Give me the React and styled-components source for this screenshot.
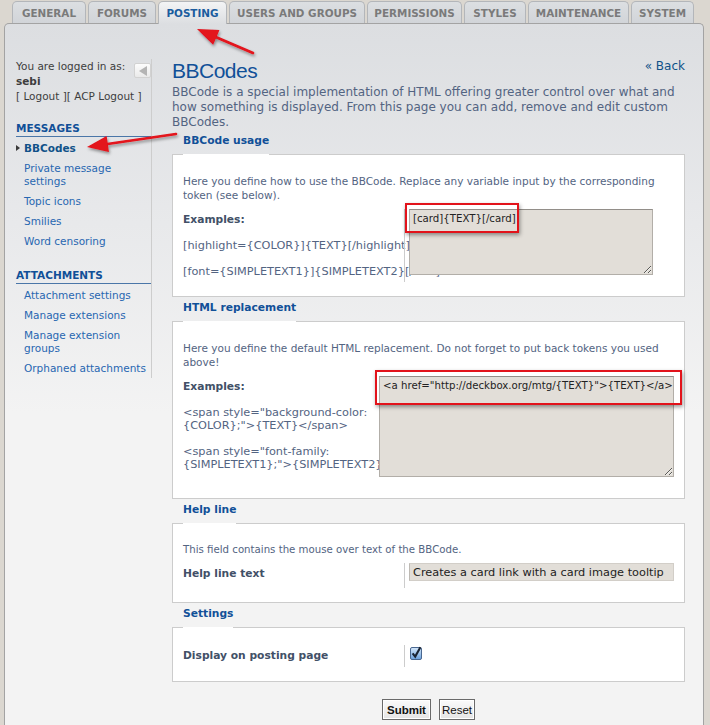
import React from 'react';
import styled, { createGlobalStyle } from 'styled-components';

const GlobalStyle = createGlobalStyle`
  html, body {
    margin: 0;
    padding: 0;
    background: #dbd7d0;
  }
  body {
    font-family: "DejaVu Sans", Verdana, sans-serif;
    color: #536482;
  }
`;

const Page = styled.div`
  position: relative;
  width: 710px;
  height: 725px;
  overflow: hidden;
  background: #dbd7d0;
`;

const TabBar = styled.ul`
  display: flex;
  align-items: flex-start;
  gap: 2px;
  margin: 0;
  padding: 1px 0 0 12px;
  height: 23px;
  box-sizing: border-box;
  list-style: none;
  position: relative;
  z-index: 1;
`;

const Tab = styled.li`
  box-sizing: border-box;
  width: ${(p) => p.$w}px;
  height: ${(p) => (p.$active ? 23 : 22)}px;
  padding-top: 1px;
  border: 1px solid #b3b6ba;
  border-bottom: none;
  border-radius: 5px 5px 0 0;
  background: ${(p) =>
    p.$active ? 'linear-gradient(#f3f4f5, #dcdee1)' : 'linear-gradient(#dcdfe2, #d1d4d8)'};
  color: ${(p) => (p.$active ? '#1b5c9e' : '#7a7a7a')};
  font: bold 10.4px/20px "DejaVu Sans", sans-serif;
  text-align: center;
  white-space: nowrap;
`;

const Panel = styled.div`
  box-sizing: border-box;
  width: 700px;
  margin-left: 4px;
  min-height: 702px;
  border: 1px solid #a3a3a3;
  border-bottom: none;
  border-radius: 5px 5px 0 0;
  background: linear-gradient(#dcdee1 0, #e8e9eb 200px, #f3f3f3 390px);
  display: flex;
  align-items: flex-start;
`;

const Sidebar = styled.nav`
  box-sizing: border-box;
  width: 147px;
  flex-shrink: 0;
  margin-top: 35px;
  padding-left: 11px;
  border-right: 1px solid #cdcdcd;
  font-size: 10.5px;
`;

const UserBox = styled.div`
  line-height: 15px;
  color: #3d3d3d;

  b {
    font-weight: bold;
  }
`;

const Toggle = styled.span`
  float: right;
  box-sizing: border-box;
  width: 17px;
  height: 15px;
  margin-top: 4px;
  border: 1px solid #d2d2d2;
  border-radius: 2px;
  background: linear-gradient(#fcfcfc, #eaeaea);
  display: flex;
  align-items: center;
  justify-content: center;

  &::before {
    content: '';
    border-right: 8px solid #b4b4b4;
    border-top: 5px solid transparent;
    border-bottom: 5px solid transparent;
  }
`;

const MenuTitle = styled.div`
  margin-top: 17px;
  padding-bottom: 1px;
  border-bottom: 1px solid #4a76a8;
  font-weight: bold;
  line-height: 14px;
  color: #115098;
  text-transform: uppercase;
`;

const MenuList = styled.ul`
  list-style: none;
  margin: 0;
  padding: 1px 0 0 8px;
`;

const MenuItem = styled.li`
  position: relative;
  padding: 4px 0 3px;
  line-height: 13px;
  color: ${(p) => (p.$active ? '#105289' : '#2867b1')};
  font-weight: ${(p) => (p.$active ? 'bold' : 'normal')};

  &::before {
    content: '';
    display: ${(p) => (p.$active ? 'block' : 'none')};
    position: absolute;
    left: -8px;
    top: 7px;
    border-left: 4px solid #3a3a3a;
    border-top: 3.5px solid transparent;
    border-bottom: 3.5px solid transparent;
  }
`;

const Main = styled.main`
  flex: 1;
  min-width: 0;
  padding: 35px 18px 0 20px;
`;

const TitleRow = styled.div`
  display: flex;
  justify-content: space-between;
  align-items: flex-start;
`;

const Title = styled.h1`
  margin: 0;
  font: normal 21px/24px "Liberation Sans", Arial, sans-serif;
  letter-spacing: -0.5px;
  color: #115098;
`;

const BackLink = styled.a`
  font-size: 12px;
  line-height: 15px;
  color: #105289;
  text-decoration: none;
`;

const Intro = styled.p`
  margin: 2px 0 0;
  font-size: 12px;
  line-height: 15px;
  color: #536482;
`;

const Legend = styled.div`
  position: relative;
  width: fit-content;
  margin: 4px 0 6px 11px;
  font-size: 10.7px;
  font-weight: bold;
  line-height: 14px;
  color: #115098;

  &::after {
    content: '';
    position: absolute;
    left: 0;
    right: 0;
    bottom: -7px;
    height: 1px;
    background: #fff;
  }
`;

const Box = styled.div`
  border: 1px solid #cccccc;
  background: #fff;
  padding: 13px 10px 10px;
`;

const Para = styled.p`
  margin: 6px 0 3px;
  font-size: ${(p) => (p.$small ? 10.2 : 10.5)}px;
  line-height: ${(p) => (p.$small ? 13 : 14)}px;
  color: #536482;
`;

const Row = styled.div`
  display: flex;
  padding: 4px 0;
`;

const Term = styled.div`
  width: ${(p) => p.$w};
  flex-shrink: 0;
  padding-top: 4px;
  font-size: 11.3px;
  line-height: 13px;
  color: #536482;
`;

const Label = styled.span`
  display: block;
  font-weight: bold;
  font-size: 10.7px;
  color: #425067;
`;

const Example = styled.span`
  display: block;
  margin-top: 13px;
  white-space: nowrap;
`;

const Detail = styled.div`
  position: relative;
  flex: 1;
  min-width: 0;
  padding: 0 0 7px 4px;
  border-left: ${(p) => (p.$line ? '1px solid #cccccc' : '1px solid transparent')};
`;

const Field = styled.div`
  position: relative;
  width: ${(p) => p.$w}px;
`;

const TextArea = styled.textarea`
  display: block;
  box-sizing: border-box;
  width: 100%;
  height: ${(p) => p.$h}px;
  margin: 0;
  padding: 2px 2px 2px 3px;
  border: 1px solid #b2aea8;
  border-top-color: #928e89;
  background: #e2ded8;
  font: 10.2px/13px "DejaVu Sans", sans-serif;
  color: #222;
  outline: none;
  overflow: hidden;
`;

const TextInput = styled.input`
  display: block;
  box-sizing: border-box;
  width: 265px;
  height: 18px;
  margin: 0;
  padding: 0 3px;
  border: 1px solid #d2cec8;
  border-left-color: #bdb9b3;
  background: #e2ded8;
  font: 11.3px "DejaVu Sans", sans-serif;
  color: #222;
  outline: none;
`;

const Callout = styled.span`
  position: absolute;
  left: ${(p) => p.$x}px;
  top: ${(p) => p.$y}px;
  width: ${(p) => p.$w}px;
  height: ${(p) => p.$h}px;
  box-sizing: border-box;
  border: 2px solid #e2131b;
  box-shadow: 1px 2px 4px rgba(0, 0, 0, 0.4);
  pointer-events: none;
  z-index: 2;
`;

const Check = styled.svg`
  display: block;
  margin: 1px 0 0 1px;
`;

const Buttons = styled.div`
  display: flex;
  justify-content: center;
  gap: 8px;
  margin-top: 17px;
`;

const Button = styled.button`
  height: 21px;
  padding: 0 ${(p) => (p.$primary ? 4 : 2)}px;
  border: 1px solid #6a6a6a;
  box-shadow: inset 0 0 0 1px #fff;
  background: linear-gradient(#fbfbfb, #e4e4e4);
  font: ${(p) => (p.$primary ? 'bold' : 'normal')} 11.5px "Liberation Sans", Arial, sans-serif;
  color: #111;
  border-radius: 0;
`;

const Overlay = styled.svg`
  position: absolute;
  left: 0;
  top: 0;
  pointer-events: none;
  z-index: 5;
`;

const tabs = [
  { label: 'GENERAL', w: 74 },
  { label: 'FORUMS', w: 68 },
  { label: 'POSTING', w: 69, active: true },
  { label: 'USERS AND GROUPS', w: 136 },
  { label: 'PERMISSIONS', w: 95 },
  { label: 'STYLES', w: 62 },
  { label: 'MAINTENANCE', w: 101 },
  { label: 'SYSTEM', w: 63 },
];

const menus = [
  {
    title: 'Messages',
    items: ['BBCodes', 'Private message settings', 'Topic icons', 'Smilies', 'Word censoring'],
  },
  {
    title: 'Attachments',
    items: ['Attachment settings', 'Manage extensions', 'Manage extension groups', 'Orphaned attachments'],
  },
];

const Arrow = ({ tip, tail, head = 21, half = 8 }) => {
  const dx = tail[0] - tip[0];
  const dy = tail[1] - tip[1];
  const len = Math.hypot(dx, dy);
  const ux = dx / len;
  const uy = dy / len;
  const bx = tip[0] + ux * (head - 2);
  const by = tip[1] + uy * (head - 2);
  const cx = tip[0] + ux * head;
  const cy = tip[1] + uy * head;
  const p1 = [cx - uy * half, cy + ux * half];
  const p2 = [cx + uy * half, cy - ux * half];
  return (
    <g>
      <line x1={tail[0]} y1={tail[1]} x2={bx} y2={by} stroke="#e3121b" strokeWidth="2.6" strokeLinecap="round" />
      <polygon points={`${tip[0]},${tip[1]} ${p1[0]},${p1[1]} ${p2[0]},${p2[1]}`} fill="#e3121b" />
    </g>
  );
};

const CheckMark = () => (
  <Check width="13" height="14" viewBox="0 0 13 14">
    <defs>
      <linearGradient id="cbg" x1="0" y1="0" x2="0" y2="1">
        <stop offset="0" stopColor="#d6e8fa" />
        <stop offset="1" stopColor="#6aa0dc" />
      </linearGradient>
    </defs>
    <rect x="0.5" y="1.5" width="11" height="12" rx="1.5" fill="url(#cbg)" stroke="#4a6890" />
    <path d="M2.6 7.4 L5.2 10.6 L10.4 1.2" fill="none" stroke="#1a2433" strokeWidth="2.1" />
  </Check>
);

const App = () => (
  <Page>
    <GlobalStyle />
    <TabBar>
      {tabs.map((t) => (
        <Tab key={t.label} $w={t.w} $active={t.active}>
          {t.label}
        </Tab>
      ))}
    </TabBar>

    <Panel>
      <Sidebar>
        <Toggle />
        <UserBox>
          You are logged in as:
          <br />
          <b>sebi</b>
          <br />[ Logout ][ ACP Logout ]
        </UserBox>
        {menus.map((m) => (
          <div key={m.title}>
            <MenuTitle>{m.title}</MenuTitle>
            <MenuList>
              {m.items.map((item) => (
                <MenuItem key={item} $active={item === 'BBCodes'}>
                  {item}
                </MenuItem>
              ))}
            </MenuList>
          </div>
        ))}
      </Sidebar>

      <Main>
        <TitleRow>
          <Title>BBCodes</Title>
          <BackLink href="#">« Back</BackLink>
        </TitleRow>
        <Intro>
          BBCode is a special implementation of HTML offering greater control over what and how something is
          displayed. From this page you can add, remove and edit custom BBCodes.
        </Intro>

        <Legend>BBCode usage</Legend>
        <Box>
          <Para>
            Here you define how to use the BBCode. Replace any variable input by the corresponding token (see below).
          </Para>
          <Row>
            <Term $w="221px">
              <Label>Examples:</Label>
              <Example>[highlight={'{COLOR}'}]{'{TEXT}'}[/highlight]</Example>
              <Example>[font={'{SIMPLETEXT1}'}]{'{SIMPLETEXT2}'}[/font]</Example>
            </Term>
            <Detail $line>
              <Field $w={244}>
                <TextArea $h={66} defaultValue="[card]{TEXT}[/card]" />
                <Callout $x={-4} $y={-6} $w={114} $h={30} />
              </Field>
            </Detail>
          </Row>
        </Box>

        <Legend>HTML replacement</Legend>
        <Box>
          <Para>
            Here you define the default HTML replacement. Do not forget to put back tokens you used above!
          </Para>
          <Row>
            <Term $w="191px">
              <Label>Examples:</Label>
              <Example>
                {'<span style="background-color:'}
                <br />
                {'{COLOR};">{TEXT}</span>'}
              </Example>
              <Example>
                {'<span style="font-family:'}
                <br />
                {'{SIMPLETEXT1};">{SIMPLETEXT2}</span>'}
              </Example>
            </Term>
            <Detail>
              <Field $w={295}>
                <TextArea
                  $h={101}
                  wrap="off"
                  defaultValue={'<a href="http://deckbox.org/mtg/{TEXT}">{TEXT}</a>'}
                />
                <Callout $x={-4} $y={-6} $w={307} $h={35} />
              </Field>
            </Detail>
          </Row>
        </Box>

        <Legend>Help line</Legend>
        <Box>
          <Para $small>This field contains the mouse over text of the BBCode.</Para>
          <Row>
            <Term $w="221px">
              <Label>Help line text</Label>
            </Term>
            <Detail $line>
              <TextInput defaultValue="Creates a card link with a card image tooltip" />
            </Detail>
          </Row>
        </Box>

        <Legend>Settings</Legend>
        <Box>
          <Row>
            <Term $w="221px">
              <Label>Display on posting page</Label>
            </Term>
            <Detail $line>
              <CheckMark />
            </Detail>
          </Row>
        </Box>

        <Buttons>
          <Button $primary>Submit</Button>
          <Button>Reset</Button>
        </Buttons>
      </Main>
    </Panel>

    <Overlay width="710" height="725" viewBox="0 0 710 725">
      <defs>
        <filter id="ash" x="-20%" y="-20%" width="140%" height="160%">
          <feDropShadow dx="1" dy="2" stdDeviation="1.5" floodColor="#000" floodOpacity="0.4" />
        </filter>
      </defs>
      <g filter="url(#ash)">
        <Arrow tip={[197, 29]} tail={[253, 53]} />
        <Arrow tip={[87, 147]} tail={[176, 134]} />
      </g>
    </Overlay>
  </Page>
);

export default App;
